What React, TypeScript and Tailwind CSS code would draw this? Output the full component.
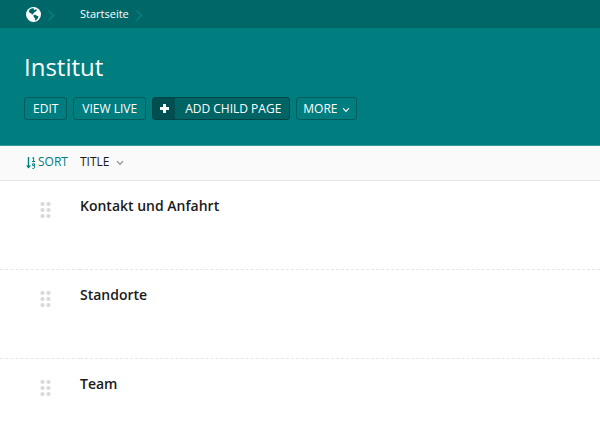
import clsx from "clsx";

const pages = ["Kontakt und Anfahrt", "Standorte", "Team"];

const buttonBase = "flex h-[23px] items-center rounded-[3px] border text-xs uppercase text-white";

function GlobeIcon() {
  return (
    <svg width="15" height="15" viewBox="0 0 14 14" aria-hidden="true">
      <circle cx="7" cy="7" r="7" fill="#fff" />
      <path
        d="M3.6 2.2 5.8 1.2 7.6 1.5 7.2 2.4 8.4 2.7 9.3 1.9 10.2 3 9.2 4.2 8 4.6 7.4 5.8 6.2 6.2 6.6 7.3 5.6 7 4.8 6.1 3.4 5.4 2.6 4Z"
        fill="#006769"
      />
      <path d="M6.9 7.6 8.4 7.2 10.8 8.4 11.8 9.2 10.9 10.8 9.2 12.6 8.4 12.4 8.5 10.7 7.2 9.4Z" fill="#006769" />
    </svg>
  );
}

function Separator() {
  return (
    <svg
      width="6"
      height="11"
      viewBox="0 0 6 11"
      fill="none"
      stroke="#008485"
      strokeWidth="1.2"
      className="mt-[2px]"
      aria-hidden="true"
    >
      <path d="M.5 .5 5.3 5.5 .5 10.5" />
    </svg>
  );
}

function ChevronDown({ className }: { className?: string }) {
  return (
    <svg
      width="8"
      height="6"
      viewBox="0 0 8 6"
      fill="none"
      stroke="currentColor"
      strokeWidth="1.1"
      className={clsx("mt-[2px]", className)}
      aria-hidden="true"
    >
      <path d="M1 1.2 4 4.4 7 1.2" />
    </svg>
  );
}

function PlusIcon() {
  return (
    <svg width="9" height="9" viewBox="0 0 9 9" fill="currentColor" aria-hidden="true">
      <path d="M3 0h3v3h3v3H6v3H3V6H0V3h3z" />
    </svg>
  );
}

function SortIcon() {
  return (
    <svg
      width="10"
      height="12"
      viewBox="0 0 10 12"
      fill="none"
      stroke="currentColor"
      className="mt-[2px]"
      aria-hidden="true"
    >
      <path d="M2.5 0v10" strokeWidth="1.4" />
      <path d="M0 8.6h5L2.5 11.6z" fill="currentColor" stroke="none" />
      <path d="M6.2 1.2 7.6 .5V4.5M6 4.5h3.2" />
      <path d="M8.6 8.6H6.6V6.8h2v3.4L7.9 11.4H6.4" />
    </svg>
  );
}

function GripIcon() {
  return (
    <svg width="12" height="16" viewBox="0 0 12 16" fill="#d9d9d9" aria-hidden="true">
      {[2, 8, 14].map((y) => (
        <g key={y}>
          <circle cx="2.5" cy={y} r="2.1" />
          <circle cx="8.5" cy={y} r="2.1" />
        </g>
      ))}
    </svg>
  );
}

export default function App() {
  return (
    <div className="min-h-screen bg-white font-['Open_Sans',sans-serif] text-[#1a1a1a]">
      <nav aria-label="Breadcrumb" className="flex h-7 items-center bg-[#006769] pt-px pl-[26px] text-[11px] text-white">
        <a href="#" aria-label="Root" className="mr-[7px]">
          <GlobeIcon />
        </a>
        <Separator />
        <a href="#" className="mr-[7px] ml-[26px]">
          Startseite
        </a>
        <Separator />
      </nav>

      <header className="border-b border-[#339999] bg-[#007d7e] px-6 pt-[23px] pb-[25px]">
        <h1 className="text-2xl text-white">Institut</h1>
        <div className="mt-[14px] flex gap-[6px]">
          <button type="button" className={clsx(buttonBase, "border-[#005b5c] px-2")}>
            Edit
          </button>
          <button type="button" className={clsx(buttonBase, "border-[#005b5c] px-2")}>
            View live
          </button>
          <button type="button" className={clsx(buttonBase, "overflow-hidden border-[#004545] bg-[#006465] pr-2")}>
            <span className="mr-[10px] flex h-full w-[22px] items-center justify-center bg-[#004f50]">
              <PlusIcon />
            </span>
            Add child page
          </button>
          <button type="button" className={clsx(buttonBase, "gap-1 border-[#005b5c] px-[6px]")}>
            More
            <ChevronDown />
          </button>
        </div>
      </header>

      <table className="w-full table-fixed border-collapse text-left">
        <thead className="border-b border-[#e6e6e6] bg-[#fafafa] text-xs">
          <tr className="h-[34px]">
            <th scope="col" className="w-20 pb-[2px] pl-[26px] font-normal">
              <a href="#" className="flex items-center gap-[2px] text-[#007d7e] uppercase">
                <SortIcon />
                Sort
              </a>
            </th>
            <th scope="col" className="pb-[2px] font-normal">
              <a href="#" className="flex items-center gap-[6px] uppercase">
                Title
                <ChevronDown className="text-[#888888]" />
              </a>
            </th>
          </tr>
        </thead>
        <tbody>
          {pages.map((title) => (
            <tr key={title} className="h-[89px] border-b border-dashed border-[#e6e6e6] align-top last:border-b-0">
              <td className="pt-[21px] pl-10">
                <button type="button" aria-label={`Move ${title}`} className="block">
                  <GripIcon />
                </button>
              </td>
              <td className="pt-[15px] text-sm font-semibold">
                <a href="#">{title}</a>
              </td>
            </tr>
          ))}
        </tbody>
      </table>
    </div>
  );
}
